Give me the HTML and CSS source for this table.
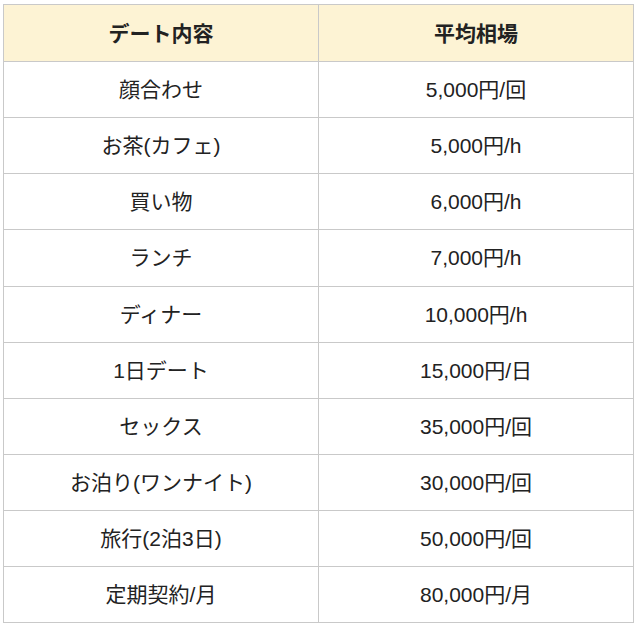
FILE: index.html
```html
<!DOCTYPE html>
<html lang="ja">
<head>
<meta charset="utf-8">
<link rel="stylesheet" href="styles.css">
</head>
<body>
<table class="rates">
  <thead>
    <tr><th>デート内容</th><th>平均相場</th></tr>
  </thead>
  <tbody>
    <tr><td>顔合わせ</td><td>5,000円/回</td></tr>
    <tr><td>お茶(カフェ)</td><td>5,000円/h</td></tr>
    <tr><td>買い物</td><td>6,000円/h</td></tr>
    <tr><td>ランチ</td><td>7,000円/h</td></tr>
    <tr><td>ディナー</td><td>10,000円/h</td></tr>
    <tr><td>1日デート</td><td>15,000円/日</td></tr>
    <tr><td>セックス</td><td>35,000円/回</td></tr>
    <tr><td>お泊り(ワンナイト)</td><td>30,000円/回</td></tr>
    <tr><td>旅行(2泊3日)</td><td>50,000円/回</td></tr>
    <tr><td>定期契約/月</td><td>80,000円/月</td></tr>
  </tbody>
</table>
</body>
</html>
```
FILE: styles.css
```css
html, body {
  margin: 0;
  padding: 0;
  background: #ffffff;
}
body {
  padding: 4px 0 0 3px;
  font-family: "Liberation Sans", "Noto Sans CJK JP", sans-serif;
  color: #222222;
}
.rates {
  border-collapse: collapse;
  width: 631px;
  table-layout: fixed;
}
.rates th,
.rates td {
  border: 1px solid #c9c9c9;
  text-align: center;
  vertical-align: middle;
  font-size: 21px;
  padding: 0 0 3px 0;
}
.rates th {
  background: #fdf3d4;
  font-weight: bold;
  height: 53px;
}
.rates td {
  height: 52.15px;
}
```
